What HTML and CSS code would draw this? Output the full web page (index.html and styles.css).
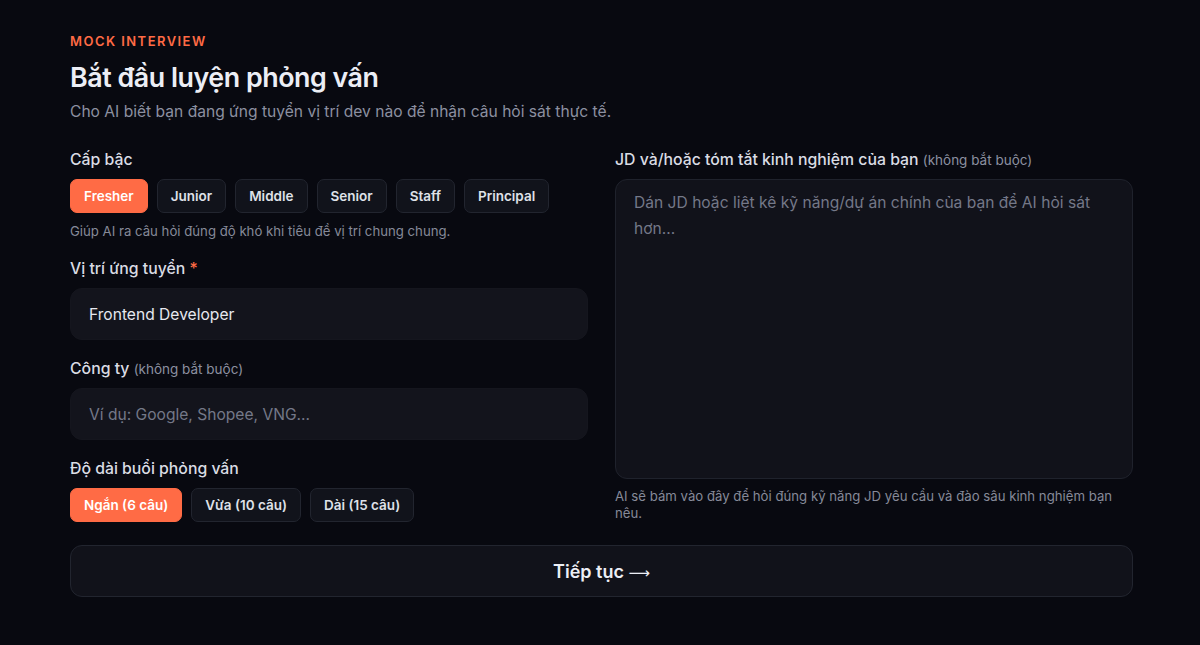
FILE: index.html
```html
<!DOCTYPE html>
<html lang="vi">
	<head>
		<meta charset="UTF-8">
		<title>Mock interview</title>
		<link rel="stylesheet" href="styles.css">
	</head>
	<body>
		<main class="page">
			<header class="intro">
				<p class="eyebrow">MOCK INTERVIEW</p>
				<h1>Bắt đầu luyện phỏng vấn</h1>
				<p class="lead">Cho AI biết bạn đang ứng tuyển vị trí dev nào để nhận câu hỏi sát thực tế.</p>
			</header>

			<form class="form-grid">
				<div class="col">
					<div class="field">
						<label class="label">Cấp bậc</label>
						<div class="pills">
							<button type="button" class="pill active">Fresher</button>
							<button type="button" class="pill">Junior</button>
							<button type="button" class="pill">Middle</button>
							<button type="button" class="pill">Senior</button>
							<button type="button" class="pill">Staff</button>
							<button type="button" class="pill">Principal</button>
						</div>
						<p class="hint">Giúp AI ra câu hỏi đúng độ khó khi tiêu đề vị trí chung chung.</p>
					</div>

					<div class="field">
						<label class="label">Vị trí ứng tuyển <span class="req">*</span></label>
						<input class="input" type="text" value="Frontend Developer">
					</div>

					<div class="field">
						<label class="label">Công ty <span class="opt">(không bắt buộc)</span></label>
						<input class="input" type="text" placeholder="Ví dụ: Google, Shopee, VNG...">
					</div>

					<div class="field">
						<label class="label">Độ dài buổi phỏng vấn</label>
						<div class="pills">
							<button type="button" class="pill active">Ngắn (6 câu)</button>
							<button type="button" class="pill">Vừa (10 câu)</button>
							<button type="button" class="pill">Dài (15 câu)</button>
						</div>
					</div>
				</div>

				<div class="col">
					<div class="field grow">
						<label class="label">JD và/hoặc tóm tắt kinh nghiệm của bạn <span class="opt">(không bắt buộc)</span></label>
						<textarea class="textarea" placeholder="Dán JD hoặc liệt kê kỹ năng/dự án chính của bạn để AI hỏi sát hơn..."></textarea>
						<p class="hint">AI sẽ bám vào đây để hỏi đúng kỹ năng JD yêu cầu và đào sâu kinh nghiệm bạn nêu.</p>
					</div>
				</div>

				<button type="button" class="submit">Tiếp tục <span class="arrow">⟶</span></button>
			</form>
		</main>
	</body>
</html>
```

FILE: styles.css
```css
body{
	margin: 0;
	padding: 0;
	background: #080910;
	color: #e6e8ef;
	font-family: 'Inter', 'Noto Sans', sans-serif;
}
.page{
	width: 1063px;
	padding: 32px 0 0 70px;
}
.eyebrow{
	margin: 0;
	color: #ff6b45;
	font-size: 13px;
	font-weight: 600;
	letter-spacing: 1.45px;
	line-height: 18px;
}
.intro h1{
	margin: 9px 0 0;
	font-size: 26.8px;
	font-weight: 600;
	letter-spacing: -0.45px;
	line-height: 36px;
	color: #eceef5;
}
.lead{
	margin: 6px 0 0;
	font-size: 15.6px;
	color: #8c90a0;
	line-height: 22px;
}
.form-grid{
	display: grid;
	grid-template-columns: 1fr 1fr;
	column-gap: 27px;
	margin-top: 26px;
}
.col{
	display: flex;
	flex-direction: column;
}
.field{
	display: flex;
	flex-direction: column;
	margin-bottom: 18px;
}
.field.grow{
	flex: 1;
	margin-bottom: 0;
}
.label{
	height: 22px;
	font-size: 15.8px;
	font-weight: 500;
	color: #dadce4;
	line-height: 22px;
	margin-bottom: 8px;
}
.req{
	color: #ff6b45;
}
.opt{
	font-size: 13.5px;
	font-weight: 400;
	line-height: 1;
	color: #8c90a0;
}
.pills{
	display: flex;
	gap: 9px;
}
.pill{
	height: 34px;
	padding: 0 13px;
	border: 1px solid #22252f;
	border-radius: 7px;
	background: #11131b;
	color: #dfe1e8;
	font-family: inherit;
	font-size: 13.5px;
	font-weight: 600;
}
.pill.active{
	background: #ff6b45;
	border-color: #ff6b45;
	color: #ffffff;
}
.hint{
	margin: 10px 0 0;
	font-size: 13.2px;
	color: #868a99;
	line-height: 17px;
}
.input{
	height: 52px;
	box-sizing: border-box;
	padding: 0 18px;
	border: 1px solid #15161e;
	border-radius: 12px;
	background: #13141c;
	color: #e6e8ef;
	font-family: inherit;
	font-size: 15.6px;
	outline: none;
}
.input::placeholder,
.textarea::placeholder{
	color: #747888;
}
.textarea{
	height: 300px;
	box-sizing: border-box;
	resize: none;
	padding: 10px 18px;
	border: 1px solid #1f222c;
	border-radius: 12px;
	background: #11121a;
	color: #e6e8ef;
	font-family: inherit;
	font-size: 15.6px;
	line-height: 26px;
	outline: none;
}
.field.grow .hint{
	margin-top: 9px;
}
.submit{
	grid-column: 1 / -1;
	height: 52px;
	margin-top: 5px;
	border: 1px solid #22252f;
	border-radius: 12px;
	background: #11121a;
	color: #eceef5;
	font-family: inherit;
	font-size: 18px;
	font-weight: 600;
}
.arrow{
	font-family: 'DejaVu Sans', sans-serif;
	font-size: 15px;
	font-weight: 400;
}
```
